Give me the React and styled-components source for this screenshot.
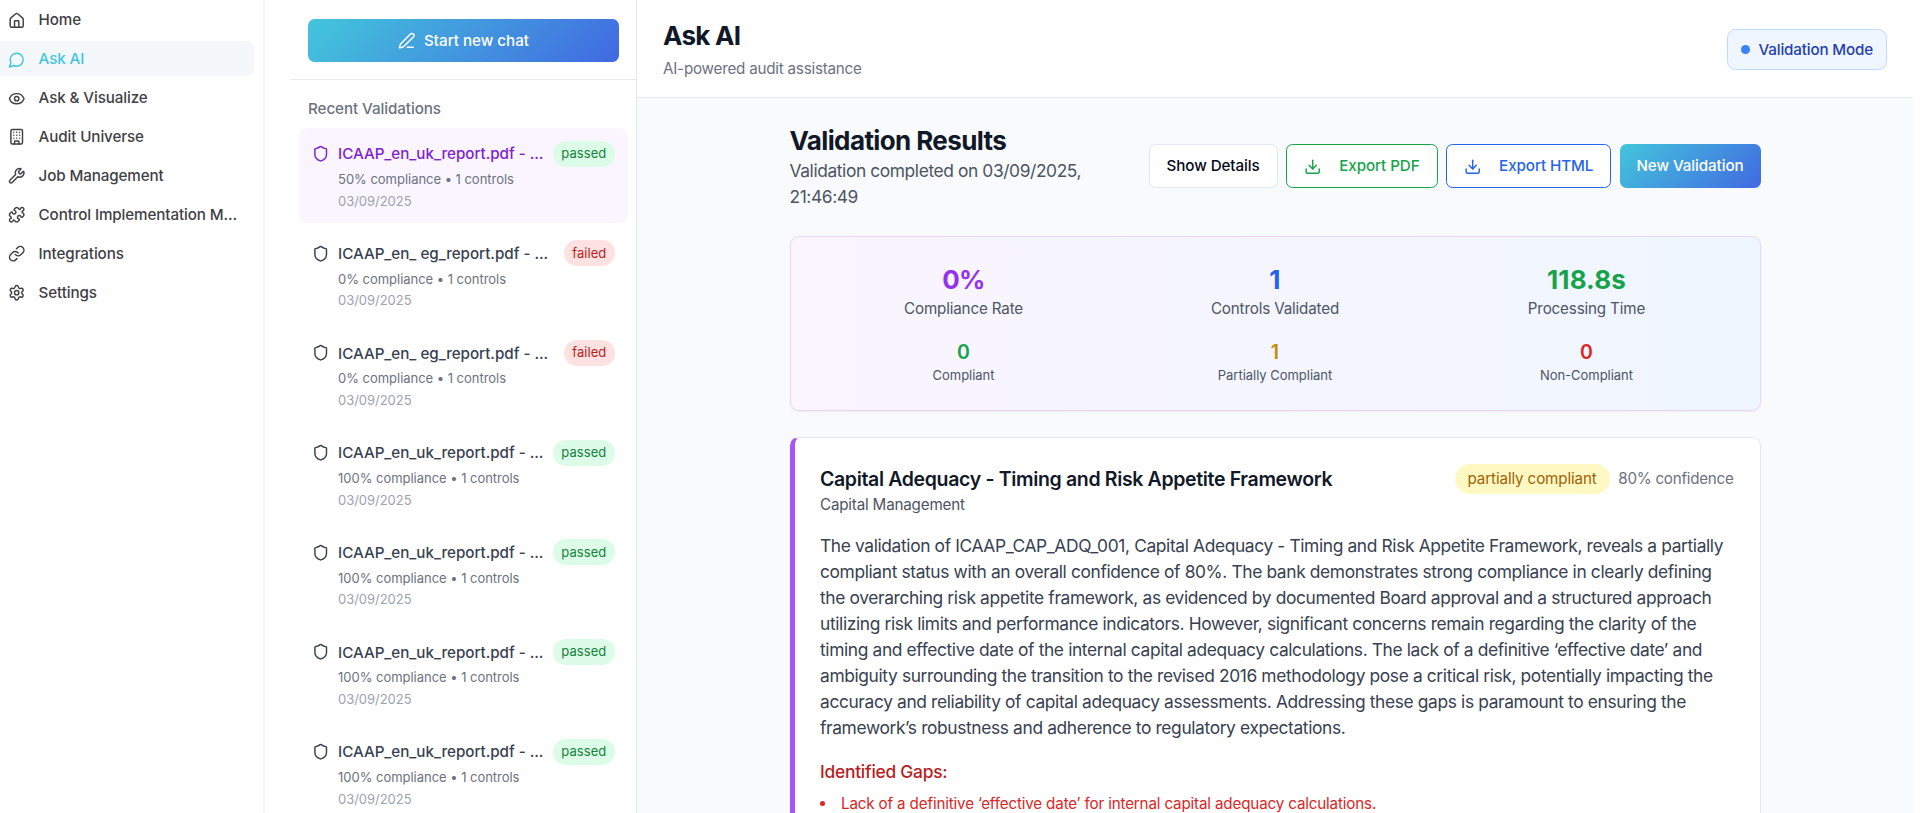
import React from "react";
import styled, { createGlobalStyle, css } from "styled-components";
import { House, Eye, Building, Wrench, Puzzle, Link, Settings, PenLine, Shield, Download } from "lucide-react";

const GlobalStyle = createGlobalStyle`
  *, *::before, *::after { box-sizing: border-box; }
  html, body, #root { height: 100%; }
  body {
    margin: 0;
    overflow: hidden;
    background: #fff;
    color: #111827;
    font-family: Inter, "Liberation Sans", sans-serif;
  }
  h1, h2, h3, h4, p, ul { margin: 0; padding: 0; font-weight: inherit; }
`;

const ICON = 17.4;

const textSm = css`
  font-size: 15.2px;
  line-height: 21.7px;
  letter-spacing: -0.0125em;
`;
const textXs = css`
  font-size: 13px;
  line-height: 17.4px;
  letter-spacing: -0.002em;
`;
const textBase = css`
  font-size: 17.36px;
  line-height: 26.04px;
  letter-spacing: -0.0212em;
`;
const text2xl = css`
  font-size: 26px;
  line-height: 34.7px;
  font-weight: 700;
  letter-spacing: -0.0235em;
`;

const Shell = styled.div`
  display: flex;
  width: 1913px;
  height: 813px;
  overflow: hidden;
`;

const Sidebar = styled.nav`
  display: flex;
  flex-direction: column;
  gap: 4.3px;
  flex: none;
  width: 265px;
  padding: 2.4px 9px 0 0;
  border-right: 2px solid #f6f6fb;
`;

const NavItem = styled.a`
  display: flex;
  align-items: center;
  gap: 13px;
  height: 34.7px;
  flex: none;
  padding: 1px 0 0 8.2px;
  border-radius: 0 6.5px 6.5px 0;
  ${textSm}
  font-weight: 500;
  letter-spacing: -0.0075em;
  white-space: nowrap;
  color: ${p => (p.$active ? "#43c6dc" : "#3f3f46")};
  background: ${p => (p.$active ? "#f4f8fa" : "transparent")};
  svg { flex: none; }
`;

const History = styled.aside`
  flex: none;
  width: 372px;
  padding-left: 25px;
  border-right: 1px solid #e5e7eb;
`;

const HistoryTop = styled.div`
  height: 80px;
  padding: 19px 17px 0 18px;
  border-bottom: 1px solid #e8eaed;
`;

const gradient = css`
  border: 0;
  color: #fff;
  background: linear-gradient(135deg, #43c6dc 0%, #4169e1 100%);
`;

const StartButton = styled.button`
  display: flex;
  align-items: center;
  justify-content: center;
  gap: 8.7px;
  width: 100%;
  height: 43px;
  border-radius: 6.5px;
  font-family: inherit;
  ${textSm}
  font-weight: 500;
  letter-spacing: -0.001em;
  ${gradient}
`;

const HistoryTitle = styled.h3`
  padding: 18px 0 8px 18px;
  ${textSm}
  font-weight: 500;
  letter-spacing: -0.005em;
  color: #6b7280;
`;

const HistoryList = styled.div`
  display: flex;
  flex-direction: column;
  gap: 4.3px;
  padding: 0 8px 0 9px;
`;

const Entry = styled.div`
  display: flex;
  flex: none;
  flex-direction: column;
  gap: 4.3px;
  height: 95.4px;
  padding: 13px;
  border-radius: 8.7px;
  background: ${p => (p.$active ? "#faf5ff" : "transparent")};
  color: ${p => (p.$active ? "#7e22ce" : "#374151")};
`;

const EntryHead = styled.div`
  display: flex;
  align-items: center;
  gap: 8.7px;
  height: 26px;
  svg { flex: none; }
`;

const EntryName = styled.span`
  flex: 1;
  padding-top: 1px;
  ${textSm}
  font-weight: 500;
  letter-spacing: -0.002em;
  white-space: nowrap;
`;

const Badge = styled.span`
  padding: 4.3px 8.7px;
  border-radius: 99px;
  ${textXs}
  letter-spacing: 0.004em;
  color: ${p => (p.$failed ? "#b91c1c" : "#15803d")};
  background: ${p => (p.$failed ? "#fee2e2" : "#dcfce7")};
`;

const EntryMeta = styled.div`
  padding-left: 26px;
  ${textXs}
  color: ${p => (p.$faint ? "#9ca3af" : "#6b7280")};
`;

const Main = styled.main`
  display: flex;
  flex: 1;
  flex-direction: column;
  min-width: 0;
  background: #f9fafc;
`;

const Header = styled.header`
  display: flex;
  flex: none;
  align-items: center;
  justify-content: space-between;
  height: 98px;
  padding: 2px 26px 0;
  background: #fff;
  border-bottom: 1px solid #e8eaed;
`;

const PageTitle = styled.h1`
  ${text2xl}
  letter-spacing: -0.028em;
  margin-bottom: 4px;
`;

const Subtitle = styled.p`
  ${textSm}
  letter-spacing: -0.0145em;
  color: #6b7280;
`;

const ModePill = styled.div`
  display: flex;
  align-items: center;
  gap: 8.7px;
  height: 40.4px;
  padding: 0 13px;
  border: 1px solid #bfdbfe;
  border-radius: 8.7px;
  background: #eff6ff;
  color: #1e40af;
  ${textSm}
  font-weight: 500;
  letter-spacing: -0.0105em;
  &::before {
    content: "";
    width: 8.7px;
    height: 8.7px;
    border-radius: 50%;
    background: #3b82f6;
  }
`;

const Content = styled.div`
  display: flex;
  flex-direction: column;
  gap: 26px;
  width: 971px;
  margin: 25.7px auto 0;
`;

const ResultsHead = styled.div`
  display: flex;
  align-items: center;
  justify-content: space-between;
`;

const ResultsTitle = styled.h2`
  ${text2xl}
`;

const ResultsDate = styled.p`
  width: 320px;
  ${textBase}
  letter-spacing: -0.0225em;
  color: #4b5563;
`;

const Actions = styled.div`
  display: flex;
  gap: 8.3px;
  padding-bottom: 1.6px;
`;

const Action = styled.button`
  display: flex;
  align-items: center;
  justify-content: center;
  gap: 17.6px;
  width: ${p => p.$width}px;
  height: 43.6px;
  padding: 0;
  border: 1px solid ${p => p.$border};
  border-radius: 6.5px;
  background: #fff;
  color: ${p => p.$color};
  font-family: inherit;
  ${textSm}
  font-weight: 500;
  letter-spacing: -0.006em;
  white-space: nowrap;
  ${p => p.$primary && gradient}
`;

const Card = styled.section`
  border: 1px solid #e5e7eb;
  border-radius: 8.7px;
  background: #fff;
  box-shadow: 0 1px 2px rgba(0, 0, 0, 0.05);
  padding: 26px;
`;

const Summary = styled(Card)`
  display: grid;
  grid-template-columns: repeat(3, 1fr);
  gap: 17.4px;
  height: 174.5px;
  padding-top: 25.5px;
  border-color: #e9d5ff;
  background: linear-gradient(to right, #faf5ff, #eff6ff);
`;

const Stat = styled.div`
  text-align: center;
  color: #4b5563;
  ${p => (p.$small ? textXs : textSm)}
  ${p => !p.$small && "letter-spacing: -0.0105em;"}
`;

const StatValue = styled.div`
  color: ${p => p.$color};
  ${text2xl}
  letter-spacing: ${p => (p.$tight ? "-0.03em" : "0.004em")};
  ${p => p.$small && css`
    font-size: 19.5px;
    line-height: 30px;
    font-weight: 600;
  `}
`;

const Report = styled(Card)`
  flex: none;
  height: 460px;
  padding-left: 25.5px;
  border-left: 5px solid #a855f7;
`;

const ReportHead = styled.div`
  display: flex;
  align-items: flex-start;
  justify-content: space-between;
  margin-bottom: 17px;
`;

const ReportTitle = styled.h3`
  font-size: 19.5px;
  line-height: 30.4px;
  font-weight: 600;
  letter-spacing: -0.0178em;
`;

const Category = styled.p`
  ${textSm}
  color: #4b5563;
`;

const Status = styled.div`
  display: flex;
  align-items: center;
  gap: 8.7px;
  ${textSm}
  letter-spacing: -0.0175em;
  color: #6b7280;
`;

const StatusBadge = styled.span`
  padding: 4.3px 13px;
  border-radius: 99px;
  letter-spacing: -0.0085em;
  color: #a16207;
  background: #fef9c3;
`;

const Findings = styled.p`
  ${textBase}
  color: #374151;
  white-space: nowrap;
`;

const GapsTitle = styled.h4`
  ${textBase}
  margin: 17.4px 0 8.2px;
  font-weight: 500;
  letter-spacing: -0.0135em;
  color: #b91c1c;
`;

const Gaps = styled.ul`
  list-style: none;
  color: #dc2626;
  ${textSm}
  letter-spacing: -0.0106em;
`;

const Gap = styled.li`
  display: flex;
  align-items: center;
  gap: 16px;
  &::before {
    content: "";
    width: 5px;
    height: 5px;
    border-radius: 50%;
    background: currentColor;
  }
`;

const ChatBubble = ({ size }) => (
  <svg width={size} height={size} viewBox="0 0 24 24" fill="none" stroke="currentColor" strokeWidth="2" strokeLinecap="round" strokeLinejoin="round">
    <path d="M7.9 20A9 9 0 1 0 4 16.1L2 22Z" />
  </svg>
);

const nav = [
  [House, "Home"],
  [ChatBubble, "Ask AI"],
  [Eye, "Ask & Visualize"],
  [Building, "Audit Universe"],
  [Wrench, "Job Management"],
  [Puzzle, "Control Implementation M..."],
  [Link, "Integrations"],
  [Settings, "Settings"],
];

const uk = "ICAAP_en_uk_report.pdf - ...";
const eg = "ICAAP_en_ eg_report.pdf - ...";
const history = [
  { name: uk, rate: 50 },
  { name: eg, rate: 0, failed: true },
  { name: eg, rate: 0, failed: true },
  { name: uk, rate: 100 },
  { name: uk, rate: 100 },
  { name: uk, rate: 100 },
  { name: uk, rate: 100 },
];

const stats = [
  ["0%", "Compliance Rate", "#9333ea"],
  ["1", "Controls Validated", "#2563eb"],
  ["118.8s", "Processing Time", "#16a34a"],
  ["0", "Compliant", "#16a34a", true],
  ["1", "Partially Compliant", "#ca8a04", true],
  ["0", "Non-Compliant", "#dc2626", true],
];

const findings = [
  "The validation of ICAAP_CAP_ADQ_001, Capital Adequacy - Timing and Risk Appetite Framework, reveals a partially",
  "compliant status with an overall confidence of 80%. The bank demonstrates strong compliance in clearly defining",
  "the overarching risk appetite framework, as evidenced by documented Board approval and a structured approach",
  "utilizing risk limits and performance indicators. However, significant concerns remain regarding the clarity of the",
  "timing and effective date of the internal capital adequacy calculations. The lack of a definitive ‘effective date’ and",
  "ambiguity surrounding the transition to the revised 2016 methodology pose a critical risk, potentially impacting the",
  "accuracy and reliability of capital adequacy assessments. Addressing these gaps is paramount to ensuring the",
  "framework’s robustness and adherence to regulatory expectations.",
];

export default function App() {
  return (
    <>
      <GlobalStyle />
      <Shell>
        <Sidebar>
          {nav.map(([Icon, label]) => (
            <NavItem key={label} $active={label === "Ask AI"}>
              <Icon size={ICON} />
              {label}
            </NavItem>
          ))}
        </Sidebar>

        <History>
          <HistoryTop>
            <StartButton>
              <PenLine size={ICON} />
              Start new chat
            </StartButton>
          </HistoryTop>
          <HistoryTitle>Recent Validations</HistoryTitle>
          <HistoryList>
            {history.map((h, i) => (
              <Entry key={i} $active={i === 0}>
                <EntryHead>
                  <Shield size={ICON} />
                  <EntryName>{h.name}</EntryName>
                  <Badge $failed={h.failed}>{h.failed ? "failed" : "passed"}</Badge>
                </EntryHead>
                <EntryMeta>{h.rate}% compliance • 1 controls</EntryMeta>
                <EntryMeta $faint>03/09/2025</EntryMeta>
              </Entry>
            ))}
          </HistoryList>
        </History>

        <Main>
          <Header>
            <div>
              <PageTitle>Ask AI</PageTitle>
              <Subtitle>AI-powered audit assistance</Subtitle>
            </div>
            <ModePill>Validation Mode</ModePill>
          </Header>

          <Content>
            <ResultsHead>
              <div>
                <ResultsTitle>Validation Results</ResultsTitle>
                <ResultsDate>Validation completed on 03/09/2025, 21:46:49</ResultsDate>
              </div>
              <Actions>
                <Action $width={129} $border="#e2e8f0" $color="#020817">Show Details</Action>
                <Action $width={152} $border="#16a34a" $color="#16a34a">
                  <Download size={ICON} />
                  Export PDF
                </Action>
                <Action $width={165} $border="#2563eb" $color="#2563eb">
                  <Download size={ICON} />
                  Export HTML
                </Action>
                <Action $width={141} $primary>New Validation</Action>
              </Actions>
            </ResultsHead>

            <Summary>
              {stats.map(([value, label, color, small]) => (
                <Stat key={label} $small={small}>
                  <StatValue $color={color} $small={small} $tight={value === "0%"}>{value}</StatValue>
                  {label}
                </Stat>
              ))}
            </Summary>

            <Report>
              <ReportHead>
                <div>
                  <ReportTitle>Capital Adequacy - Timing and Risk Appetite Framework</ReportTitle>
                  <Category>Capital Management</Category>
                </div>
                <Status>
                  <StatusBadge>partially compliant</StatusBadge>
                  80% confidence
                </Status>
              </ReportHead>
              <Findings>
                {findings.map((line, i) => (
                  <React.Fragment key={i}>
                    {line}
                    {i < findings.length - 1 && <br />}
                  </React.Fragment>
                ))}
              </Findings>
              <GapsTitle>Identified Gaps:</GapsTitle>
              <Gaps>
                <Gap>Lack of a definitive ‘effective date’ for internal capital adequacy calculations.</Gap>
              </Gaps>
            </Report>
          </Content>
        </Main>
      </Shell>
    </>
  );
}
